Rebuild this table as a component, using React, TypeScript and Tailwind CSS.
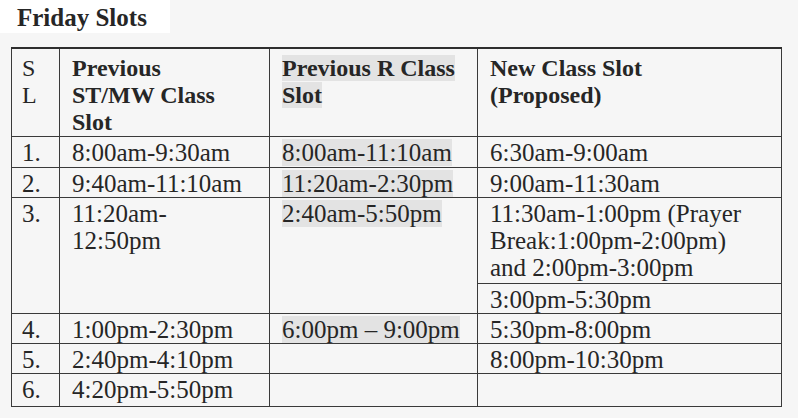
import React from 'react';

type Row = {
  sl: string;
  prev: string;
  r: string;
  next: string;
  h: string;
};

const serif = { fontFamily: '"Liberation Serif", "Times New Roman", serif' };

const Shade: React.FC<{ children: React.ReactNode }> = ({ children }) => (
  <span className="bg-[#e3e3e3] [box-decoration-break:clone]">{children}</span>
);

const cell = 'border border-[#3a3a3a] align-top px-[12px] pt-[2px] pb-0';

export default function App() {
  const rows: Row[] = [
    { sl: '1.', prev: '8:00am-9:30am', r: '8:00am-11:10am', next: '6:30am-9:00am', h: 'h-[31px]' },
    { sl: '2.', prev: '9:40am-11:10am', r: '11:20am-2:30pm', next: '9:00am-11:30am', h: 'h-[29px]' },
  ];

  return (
    <div className="w-[798px] h-[418px] bg-[#f6f6f6] text-[#262626] overflow-hidden" style={serif}>
      <div className="w-[170px] h-[33px] bg-white pl-[17px] pt-[4px]">
        <h1 className="text-[25px] leading-[27px] font-bold">Friday Slots</h1>
      </div>

      <table className="ml-[11px] mt-[14px] border-collapse table-fixed w-[770px] text-[25px] leading-[27px]">
        <colgroup>
          <col className="w-[48px]" />
          <col className="w-[210px]" />
          <col className="w-[208px]" />
          <col className="w-[304px]" />
        </colgroup>
        <thead>
          <tr className="h-[88px] font-bold text-[24px] border-t-2 border-[#2e2e2e]">
            <th className={`${cell} pl-[10px] pr-0 pt-[6px] text-left font-normal`}>
              S<br />L
            </th>
            <th className={`${cell} pt-[6px] text-left`}>
              Previous
              <br />
              ST/MW Class
              <br />
              Slot
            </th>
            <th className={`${cell} pt-[6px] text-left`}>
              <Shade>Previous R Class</Shade>
              <br />
              <Shade>Slot</Shade>
            </th>
            <th className={`${cell} pt-[6px] text-left`}>
              New Class Slot
              <br />
              (Proposed)
            </th>
          </tr>
        </thead>
        <tbody>
          {rows.map((row) => (
            <tr key={row.sl} className={row.h}>
              <td className={`${cell} pl-[10px] pr-0`}>{row.sl}</td>
              <td className={cell}>{row.prev}</td>
              <td className={cell}>
                <Shade>{row.r}</Shade>
              </td>
              <td className={cell}>{row.next}</td>
            </tr>
          ))}

          {/* row 3 is split in the last column */}
          <tr className="h-[86px]">
            <td rowSpan={2} className={`${cell} pl-[10px] pr-0`}>3.</td>
            <td rowSpan={2} className={cell}>
              11:20am-
              <br />
              12:50pm
            </td>
            <td rowSpan={2} className={cell}>
              <Shade>2:40am-5:50pm</Shade>
            </td>
            <td className={cell}>
              11:30am-1:00pm (Prayer
              <br />
              Break:1:00pm-2:00pm)
              <br />
              and 2:00pm-3:00pm
            </td>
          </tr>
          <tr className="h-[30px]">
            <td className={cell}>3:00pm-5:30pm</td>
          </tr>

          <tr className="h-[29px]">
            <td className={`${cell} pl-[10px] pr-0`}>4.</td>
            <td className={cell}>1:00pm-2:30pm</td>
            <td className={cell}>
              <Shade>6:00pm – 9:00pm</Shade>
            </td>
            <td className={cell}>5:30pm-8:00pm</td>
          </tr>
          <tr className="h-[29px]">
            <td className={`${cell} pl-[10px] pr-0`}>5.</td>
            <td className={cell}>2:40pm-4:10pm</td>
            <td className={cell}></td>
            <td className={cell}>8:00pm-10:30pm</td>
          </tr>
          <tr className="h-[33px]">
            <td className={`${cell} pl-[10px] pr-0`}>6.</td>
            <td className={cell}>4:20pm-5:50pm</td>
            <td className={cell}></td>
            <td className={cell}></td>
          </tr>
        </tbody>
      </table>
    </div>
  );
}
